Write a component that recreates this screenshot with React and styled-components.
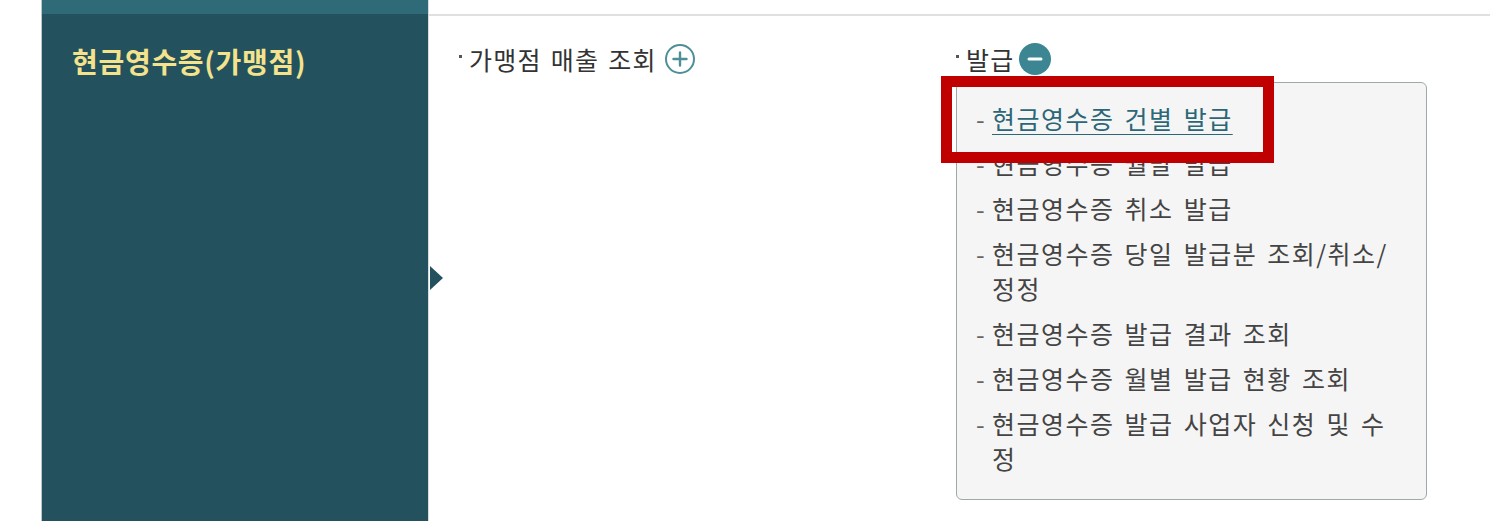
import React from "react";
import styled, { createGlobalStyle } from "styled-components";

const GlobalStyle = createGlobalStyle`
  html, body {
    margin: 0;
    padding: 0;
    background: #ffffff;
    font-family: "Noto Sans CJK KR", "Noto Sans", sans-serif;
  }
  ul {
    margin: 0;
    padding: 0;
    list-style: none;
  }
`;

const Page = styled.div`
  display: flex;
  flex-direction: column;
  padding-left: 41px;
  min-height: 521px;
  box-sizing: border-box;
`;

const TopBar = styled.div`
  display: flex;
  height: 14px;
`;

const TopLeft = styled.div`
  width: 386px;
  background: #2e6a77;
  border-left: 1px solid #b9c6ca;
  border-right: 1px solid #d6dcde;
`;

const Section = styled.div`
  display: flex;
  flex: 1;
`;

const Panel = styled.div`
  position: relative;
  width: 356px;
  padding: 29px 0 0 30px;
  background: #23525e;
  border-left: 1px solid #b9c6ca;
  border-right: 1px solid #d6dcde;

  &::after {
    content: "";
    position: absolute;
    right: -15px;
    top: 252px;
    border-style: solid;
    border-width: 12px 0 12px 13px;
    border-color: transparent transparent transparent #23525e;
  }
`;

const PanelTitle = styled.h2`
  margin: 0;
  font-size: 28px;
  line-height: 36px;
  font-weight: 700;
  color: #f4e38c;
  letter-spacing: 0.7px;
`;

const Content = styled.div`
  flex: 1;
  display: flex;
  border-top: 2px solid #e0e0e0;
  padding: 25px 0 0 30px;
`;

const Column = styled.div`
  width: 497px;
`;

const Heading = styled.div`
  display: flex;
  align-items: center;
  height: 36px;
  font-size: 25px;
  color: #333;
  letter-spacing: 1.3px;
  word-spacing: 2px;

  &::before {
    content: "";
    flex: none;
    width: 3px;
    height: 3px;
    background: #555;
    margin: 14px 7px 0 0;
    align-self: flex-start;
  }
`;

const IconWrap = styled.span`
  display: inline-flex;
  margin-left: ${(p) => p.$gap}px;
`;

const SubBox = styled.div`
  position: relative;
  width: 471px;
  box-sizing: border-box;
  margin-top: 5px;
  padding: 18px 18px 23px 19px;
  background: #f5f5f5;
  border: 1px solid #9fa9ac;
  border-radius: 6px;
`;

const Item = styled.li`
  display: flex;
  font-size: 25px;
  line-height: 35px;
  color: #444;
  letter-spacing: 1.5px;
  word-spacing: 3px;
  & + & {
    margin-top: 10px;
  }
`;

const Dash = styled.span`
  flex: none;
  width: 16px;
  color: #666;
`;

const ItemText = styled.a`
  flex: 1;
  color: ${(p) => (p.$active ? "#2c6677" : "#444")};
  text-decoration: ${(p) => (p.$active ? "underline" : "none")};
  text-decoration-thickness: 1px;
  text-underline-offset: 5px;
`;

const Highlight = styled.div`
  position: absolute;
  left: -16px;
  top: -7px;
  width: 333px;
  height: 87px;
  box-sizing: border-box;
  border: 11px solid #c00000;
  pointer-events: none;
`;

const PlusIcon = () => (
  <svg width="32" height="32" viewBox="0 0 32 32">
    <circle cx="16" cy="16" r="14" fill="none" stroke="#4d8f99" strokeWidth="2" />
    <path d="M16 9.5v13M9.5 16h13" stroke="#4d8f99" strokeWidth="2.4" strokeLinecap="round" />
  </svg>
);

const MinusIcon = () => (
  <svg width="32" height="32" viewBox="0 0 32 32">
    <circle cx="16" cy="16" r="16" fill="#3b8692" />
    <path d="M10 16h12" stroke="#ffffff" strokeWidth="3" strokeLinecap="round" />
  </svg>
);

const items = [
  "현금영수증 건별 발급",
  "현금영수증 월말 발급",
  "현금영수증 취소 발급",
  "현금영수증 당일 발급분 조회/취소/정정",
  "현금영수증 발급 결과 조회",
  "현금영수증 월별 발급 현황 조회",
  "현금영수증 발급 사업자 신청 및 수정",
];

export default function App() {
  return (
    <>
      <GlobalStyle />
      <Page>
        <TopBar>
          <TopLeft />
        </TopBar>
        <Section>
          <Panel>
            <PanelTitle>현금영수증(가맹점)</PanelTitle>
          </Panel>
          <Content>
            <Column>
              <Heading>
                가맹점 매출 조회
                <IconWrap $gap={7}>
                  <PlusIcon />
                </IconWrap>
              </Heading>
            </Column>
            <Column>
              <Heading>
                발급
                <IconWrap $gap={4}>
                  <MinusIcon />
                </IconWrap>
              </Heading>
              <SubBox>
                <Highlight />
                <ul>
                  {items.map((text, i) => (
                    <Item key={text}>
                      <Dash>-</Dash>
                      <ItemText href="#" $active={i === 0}>
                        {text}
                      </ItemText>
                    </Item>
                  ))}
                </ul>
              </SubBox>
            </Column>
          </Content>
        </Section>
      </Page>
    </>
  );
}
